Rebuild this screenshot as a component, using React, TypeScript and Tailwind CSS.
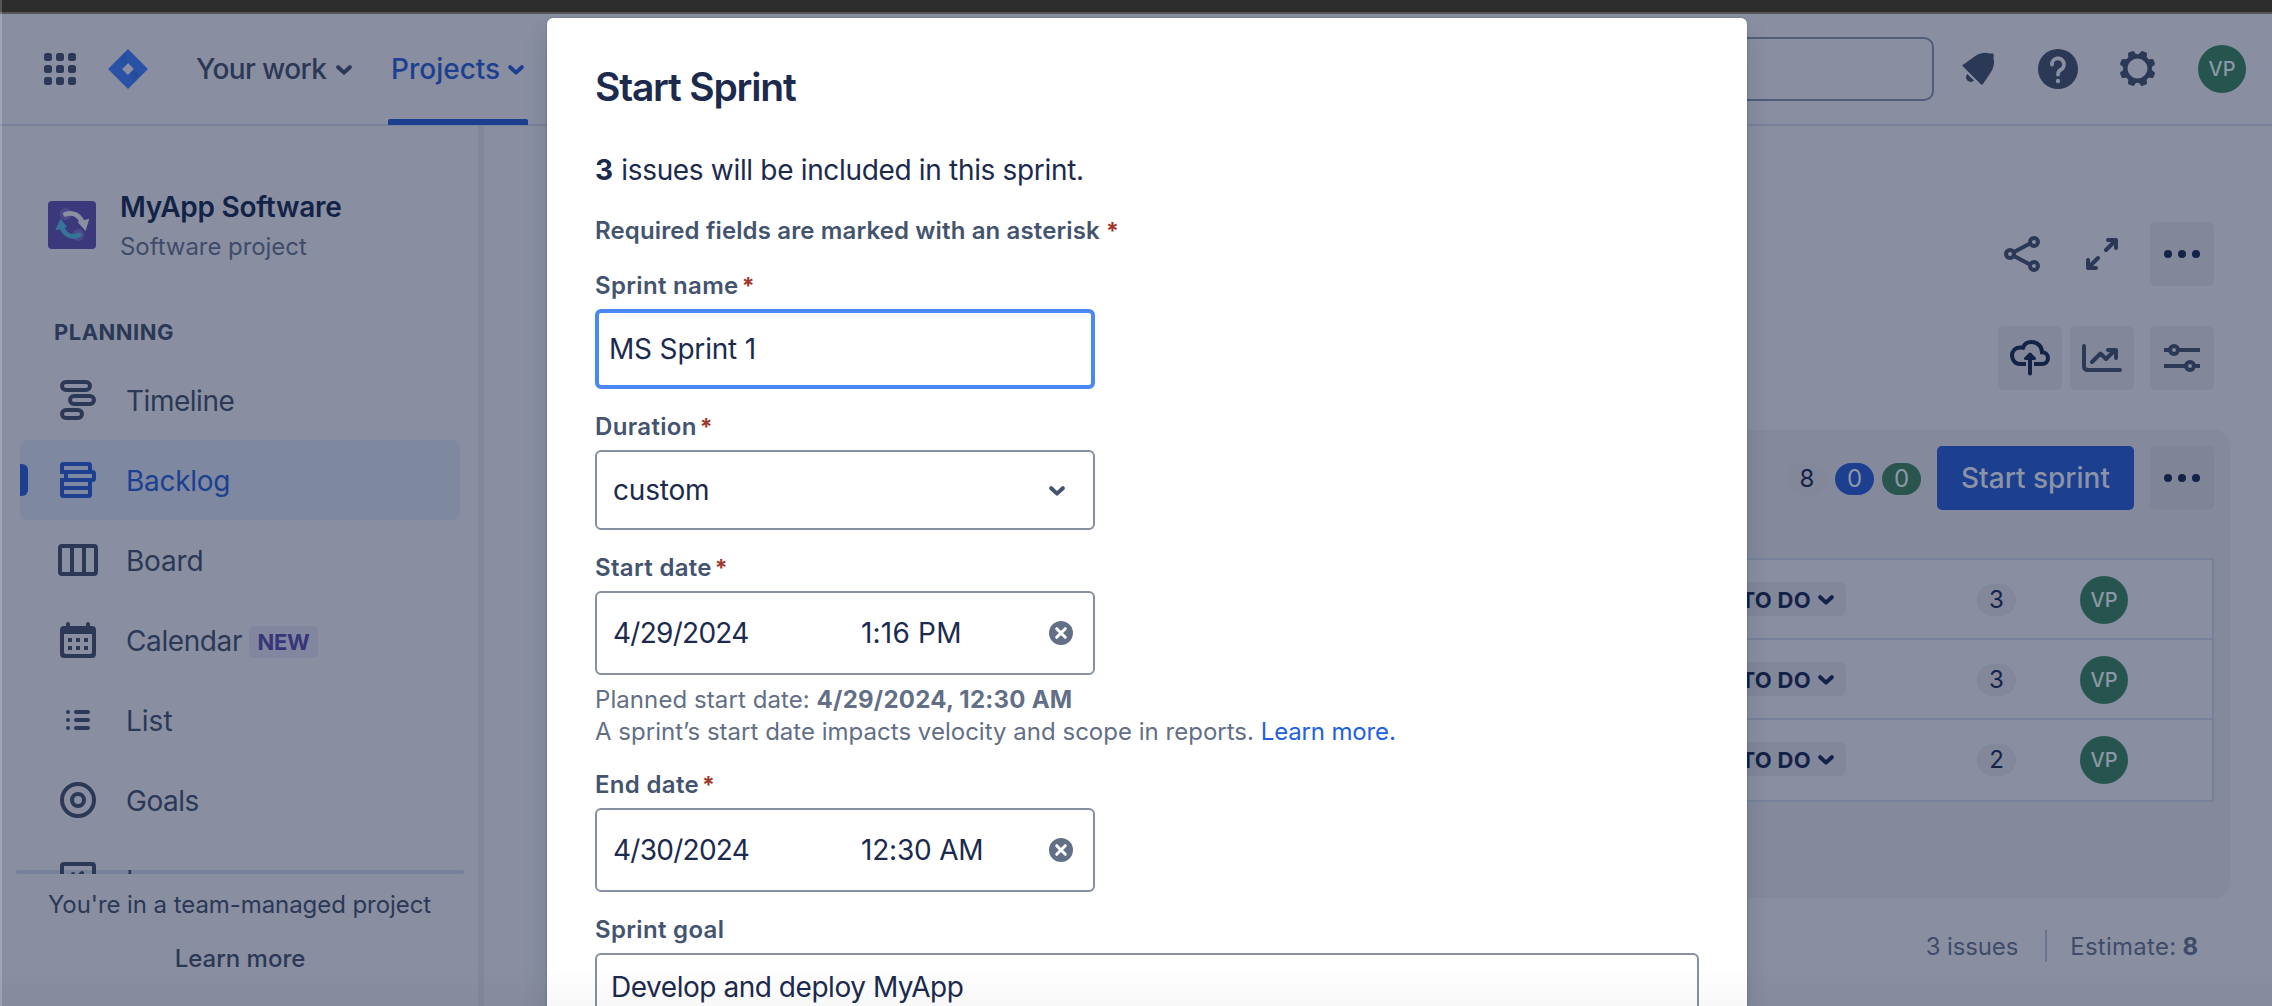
import type { ReactNode } from "react";

const NAVY = "#2b3856";
const INK = "#132347";
const PAGE = "#898fa1";

function Chevron({ color, className = "" }: { color: string; className?: string }) {
  return (
    <svg width="16" height="10" viewBox="0 0 16 10" className={"shrink-0 " + className}>
      <path d="M2.2 2.2 8 7.6l5.800-5.400" fill="none" stroke={color} strokeWidth="4" strokeLinecap="round" strokeLinejoin="round" />
    </svg>
  );
}

function GridIcon() {
  return (
    <div className="grid size-8 grid-cols-3 gap-1">
      {Array.from({ length: 9 }, (_, i) => (
        <span key={i} className="rounded-[2.500px] bg-[#2b3856]" />
      ))}
    </div>
  );
}

function Logo() {
  return (
    <svg width="40" height="40" viewBox="0 0 40 40">
      <defs>
        <linearGradient id="lg1" x1="0.9" y1="0.2" x2="0.3" y2="0.7">
          <stop offset="0" stopColor="#21438c" />
          <stop offset="1" stopColor="#2952a8" />
        </linearGradient>
      </defs>
      <path d="M20 0 40 20 20 40 0 20ZM20 14l-6 6 6 6 6-6Z" fill="#2952a6" fillRule="evenodd" />
      <path d="M20 0.500C16.500 4.500 16.500 9.500 20 14l-5.500 5.500L9 14Z" fill="url(#lg1)" opacity="0.8" />
      <path d="M20 39.500C23.500 35.500 23.500 30.500 20 26l5.500-5.500L31 26Z" fill="url(#lg1)" opacity="0.8" />
    </svg>
  );
}

function BellIcon() {
  return (
    <svg width="48" height="48" viewBox="0 0 48 48" fill={NAVY}>
      <path d="M8 20.500 22 10.500C27 7.200 32.500 7.300 36.500 8.800Q38.500 7.600 39.500 9.200 40.200 10.800 39.300 12.500C41 18 39.500 23 37 27L29 39Q28 40.500 26.600 39Z" />
      <path d="M13.300 29 20 35.500A4.600 4.600 0 1 1 13.300 29Z" />
    </svg>
  );
}

function HelpIcon() {
  return (
    <svg width="48" height="48" viewBox="0 0 48 48">
      <circle cx="24" cy="24" r="20" fill={NAVY} />
      <path d="M18 19.500a6 6 0 1 1 8.800 5.200C25 25.800 24 26.800 24 29.500" fill="none" stroke={PAGE} strokeWidth="3.800" strokeLinecap="round" />
      <circle cx="24" cy="36" r="2.200" fill={PAGE} />
    </svg>
  );
}

function GearIcon() {
  return (
    <svg width="48" height="48" viewBox="0 0 48 48">
      <circle cx="23.500" cy="23.500" r="12.200" fill="none" stroke={NAVY} strokeWidth="4.400" />
      {[22.5, 67.5, 112.5, 157.5, 202.5, 247.5, 292.5, 337.5].map((a) => (
        <path key={a} d="M18.800 12 20.200 6.600Q20.500 5.500 21.600 5.500h3.800q1.100 0 1.400 1.100L28.200 12Z" fill={NAVY} transform={`rotate(${a} 23.500 23.500)`} />
      ))}
    </svg>
  );
}

function Avatar() {
  return (
    <div className="flex size-12 shrink-0 items-center justify-center rounded-full bg-[#265550] text-[20px] font-medium leading-none text-[#8c98a6]">
      VP
    </div>
  );
}

function ProjectAvatar() {
  return (
    <svg width="48" height="48" viewBox="0 0 48 48" className="shrink-0">
      <rect width="48" height="48" rx="4" fill="#3b387c" />
      <circle cx="17.700" cy="13" r="6" fill="#4b4988" />
      <circle cx="30.300" cy="34" r="6" fill="#4b4988" />
      <path d="M17.500 13.200C25 10.500 31.500 14.500 34.500 21.500" fill="none" stroke="#8b8f9f" strokeWidth="4.800" strokeLinecap="round" />
      <path d="M29.500 21 41.300 17.700 37.600 30Z" fill="#8b8f9f" />
      <path d="M31 34C23.500 37.500 16 33.500 13.500 25.500" fill="none" stroke="#37749a" strokeWidth="4.800" strokeLinecap="round" />
      <path d="M12.500 17.600 7.200 29.400 19.200 26Z" fill="#37749a" />
    </svg>
  );
}

function TimelineIcon() {
  return (
    <svg width="40" height="48" viewBox="0 0 40 48" fill="none" stroke={NAVY} strokeWidth="4">
      <rect x="4" y="6" width="28" height="8" rx="4" />
      <rect x="12" y="20" width="24" height="8" rx="4" />
      <rect x="4" y="34" width="20" height="8" rx="4" />
    </svg>
  );
}

function BacklogIcon() {
  return (
    <svg width="40" height="48" viewBox="0 0 40 48" fill="none" stroke="#1d3f8f" strokeWidth="4">
      <path d="M8 16H4V9.500Q4 8 5.500 8h25Q32 8 32 9.500V16" />
      <rect x="8" y="16" width="28" height="8" rx="1.500" />
      <path d="M8 24H4v14.500Q4 40 5.500 40h25q1.500 0 1.500-1.500V24M4 32h28" />
    </svg>
  );
}

function BoardIcon() {
  return (
    <svg width="40" height="48" viewBox="0 0 40 48" fill="none" stroke={NAVY} strokeWidth="4">
      <rect x="2" y="10" width="36" height="28" rx="2" />
      <path d="M14 10v28M26 10v28" />
    </svg>
  );
}

function CalendarIcon() {
  return (
    <svg width="40" height="48" viewBox="0 0 40 48" fill={NAVY}>
      <rect x="8" y="6" width="4" height="8" rx="2" />
      <rect x="28" y="6" width="4" height="8" rx="2" />
      <path fillRule="evenodd" d="M6 10h28q4 0 4 4v24q0 4-4 4H6q-4 0-4-4V14q0-4 4-4ZM6 18v18q0 2 2 2h24q2 0 2-2V18Z" />
      {[10, 18, 26].map((x) => (
        <g key={x}>
          <rect x={x} y="22" width="4" height="4" />
          <rect x={x} y="30" width="4" height="4" />
        </g>
      ))}
    </svg>
  );
}

function ListIcon() {
  return (
    <svg width="40" height="48" viewBox="0 0 40 48" fill={NAVY}>
      {[14, 22, 30].map((y) => (
        <g key={y}>
          <rect x="8" y={y} width="4" height="4" rx="2" />
          <rect x="16" y={y} width="16" height="4" rx="2" />
        </g>
      ))}
    </svg>
  );
}

function GoalsIcon() {
  return (
    <svg width="40" height="48" viewBox="0 0 40 48" fill="none" stroke={NAVY} strokeWidth="4">
      <circle cx="20" cy="24" r="16" />
      <circle cx="20" cy="24" r="6" />
    </svg>
  );
}

function IssuesIcon() {
  return (
    <svg width="40" height="48" viewBox="0 0 40 48" fill="none" stroke={NAVY} strokeWidth="4">
      <rect x="4" y="8" width="32" height="32" rx="2" />
      <path d="m24 17-7 7M15 18v6" strokeLinecap="round" />
    </svg>
  );
}

function ShareIcon() {
  return (
    <svg width="64" height="64" viewBox="0 0 64 64" fill="none" stroke={NAVY} strokeWidth="4">
      <circle cx="20" cy="32" r="4" />
      <circle cx="44" cy="20" r="4" />
      <circle cx="44" cy="44" r="4" />
      <path d="m24 30 16-8.500M24 34l16 8.500" />
    </svg>
  );
}

function ExpandIcon() {
  return (
    <svg width="64" height="64" viewBox="0 0 64 64" fill="none" stroke={NAVY} strokeWidth="4" strokeLinecap="round" strokeLinejoin="round">
      <path d="m36 28 9-9M38 18h8v8M28 36l-9 9M18 38v8h8" />
      <path d="M41 18h5v5ZM18 41v5h5Z" fill={NAVY} strokeWidth="2" />
    </svg>
  );
}

function DotsIcon() {
  return (
    <svg width="64" height="64" viewBox="0 0 64 64" fill={INK}>
      <circle cx="18" cy="32" r="4" />
      <circle cx="32" cy="32" r="4" />
      <circle cx="46" cy="32" r="4" />
    </svg>
  );
}

function CloudIcon() {
  return (
    <svg width="64" height="64" viewBox="0 0 64 64" fill="none" stroke={INK} strokeWidth="4">
      <path d="M28 38h-6C17 38 14 34 14 29.500 14 25 17.500 21 22.500 21.500L25 21.800C26.200 18 29.500 16 33.500 16 39.500 16 44 20.500 44 26.200 47.500 26.200 50 28.800 50 32 50 35.500 47.500 38 44 38h-8" />
      <path d="M32 29v18.500" strokeLinecap="round" />
      <path d="M32 28l-4.500 4.500h9Z" fill={INK} strokeWidth="3" strokeLinejoin="round" />
    </svg>
  );
}

function ChartIcon() {
  return (
    <svg width="64" height="64" viewBox="0 0 64 64" fill="none" stroke={NAVY} strokeWidth="4" strokeLinecap="round" strokeLinejoin="round">
      <path d="M14 20v20q0 4 4 4h32" />
      <path d="m22 36 8.500-8.500L36 33l9-9M38 24h8v8" />
      <path d="M41.500 24h4.500v4.500Z" fill={NAVY} strokeWidth="2" />
    </svg>
  );
}

function SlidersIcon() {
  return (
    <svg width="64" height="64" viewBox="0 0 64 64" fill="none" stroke={NAVY} strokeWidth="4">
      <path d="M14 24h6M28 24h22M14 40h22M44 40h6" />
      <circle cx="24" cy="24" r="4" />
      <circle cx="40" cy="40" r="4" />
    </svg>
  );
}

function ClearIcon() {
  return (
    <svg width="24" height="24" viewBox="0 0 24 24" className="shrink-0">
      <circle cx="12" cy="12" r="12" fill="#626f86" />
      <path d="m7.700 7.700 8.600 8.600m0-8.600-8.600 8.600" stroke="#fff" strokeWidth="3" strokeLinecap="round" />
    </svg>
  );
}

function IconButton({ children, plain = false }: { children: ReactNode; plain?: boolean }) {
  return <button className={plain ? "block size-16" : "block size-16 rounded-md bg-[#82879a]"}>{children}</button>;
}

function NavItem({ icon, label, active = false, badge, tracking = "" }: { icon: ReactNode; label: string; active?: boolean; badge?: string; tracking?: string }) {
  return (
    <div className={"relative ml-5 flex h-20 w-[440px] shrink-0 items-center overflow-hidden rounded-md pl-[38px] text-[28px] leading-10 " + (active ? "bg-[#7e89a1] text-[#1d3f8f]" : "text-[#2b3856]")}>
      {active && <span className="absolute left-0 top-6 h-8 w-2 rounded-r-md bg-[#1d3f8f]" />}
      <span className="mr-7 block w-10">{icon}</span>
      <span className={"pt-px " + tracking}>{label}</span>
      {badge && (
        <span className="ml-[7px] mt-1 flex h-8 w-[69px] items-center justify-center rounded-[5px] bg-[#83869f] text-[22px] font-bold tracking-[-0.300px] text-[#37357a]">{badge}</span>
      )}
    </div>
  );
}

function Sidebar() {
  return (
    <aside className="flex w-[484px] shrink-0 flex-col border-r-[6px] border-[#82879a]">
      <div className="flex items-center gap-6 pl-12 pt-[61px]">
        <ProjectAvatar />
        <div className="w-[240px] whitespace-nowrap">
          <div className="h-10 text-[28px] font-semibold leading-[41px] tracking-[-0.250px] text-[#132347]">MyApp Software</div>
          <div className="h-9 text-[24px] leading-10 tracking-[-0.060px] text-[#3f4c69]">Software project</div>
        </div>
      </div>
      <div className="mt-[53px] pl-[54px] text-[22px] font-bold leading-8 tracking-[0.480px] text-[#2b3856]">PLANNING</div>
      <div className="relative z-10 mt-3 flex h-[514px] shrink-0 flex-col overflow-hidden">
        <NavItem icon={<TimelineIcon />} label="Timeline" tracking="tracking-[-0.480px]" />
        <NavItem icon={<BacklogIcon />} label="Backlog" active tracking="tracking-[-0.280px]" />
        <NavItem icon={<BoardIcon />} label="Board" tracking="tracking-[-0.200px]" />
        <NavItem icon={<CalendarIcon />} label="Calendar" badge="NEW" tracking="tracking-[-0.400px]" />
        <NavItem icon={<ListIcon />} label="List" />
        <NavItem icon={<GoalsIcon />} label="Goals" tracking="tracking-[-0.500px]" />
        <NavItem icon={<IssuesIcon />} label="Issues" />
      </div>
      <div className="-mt-1 ml-4 h-1 w-[448px] shrink-0 rounded-full bg-[#77819a]" />
      <div className="mt-[15px] pl-px text-center text-[24px] leading-8 tracking-[-0.070px] text-[#2b3856]">You're in a team-managed project</div>
      <div className="mt-[22px] pl-0.5 text-center text-[24px] font-medium leading-8 text-[#2b3856]">Learn more</div>
    </aside>
  );
}

function TopNav() {
  return (
    <header className="flex h-28 shrink-0 items-center border-b-2 border-[#77819a] pl-11 pr-[26px] text-[28px] font-medium text-[#2b3856]">
      <GridIcon />
      <div className="ml-8"><Logo /></div>
      <div className="ml-12 flex w-[156px] items-center justify-between whitespace-nowrap">
        <span className="tracking-[-0.600px]">Your work</span>
        <Chevron color={NAVY} className="mt-0.5" />
      </div>
      <div className="relative ml-9 flex h-full w-[140px] items-center justify-between pl-[3px] pr-1 text-[#1d3f8f]">
        <span>Projects</span>
        <Chevron color="#1d3f8f" className="mt-0.5" />
        <span className="absolute -bottom-px left-0 h-1.5 w-full rounded-t-[2px] bg-[#1d3f8f]" />
      </div>
      <div className="ml-auto h-16 w-[400px] rounded-[10px] border-2 border-[#505c7a]" />
      <div className="ml-5"><BellIcon /></div>
      <div className="ml-8"><HelpIcon /></div>
      <div className="ml-8"><GearIcon /></div>
      <div className="ml-9"><Avatar /></div>
    </header>
  );
}

function IssueRow({ points, last = false }: { points: number; last?: boolean }) {
  return (
    <div className={"flex items-center justify-end pr-[84px] " + (last ? "h-20" : "h-20 border-b-2 border-[#77819a] pt-0.5")}>
      <div className="mb-0.5 flex h-[34px] items-center rounded-md bg-[#82879a] px-3 pt-0.5 text-[22px] font-bold tracking-[0.300px] text-[#132347]">
        TO DO
        <Chevron color={INK} className="ml-[7px]" />
      </div>
      <div className="ml-[131px] flex h-8 w-[39px] items-center justify-center rounded-full bg-[#82879a] text-[24px] text-[#132347]">{points}</div>
      <div className="ml-16"><Avatar /></div>
    </div>
  );
}

function Board() {
  return (
    <main className="flex min-w-0 flex-1 flex-col">
      <div className="mt-24 flex justify-end gap-4 pr-[58px]">
        <IconButton plain><ShareIcon /></IconButton>
        <IconButton plain><ExpandIcon /></IconButton>
        <IconButton><DotsIcon /></IconButton>
      </div>
      <div className="mt-10 flex justify-end pr-[58px]">
        <IconButton><CloudIcon /></IconButton>
        <div className="ml-2 mr-4"><IconButton><ChartIcon /></IconButton></div>
        <IconButton><SlidersIcon /></IconButton>
      </div>
      <section className="ml-[72px] mr-[42px] mt-10 h-[468px] rounded-2xl bg-[#848a9b] p-4">
        <div className="flex h-16 items-center justify-end text-[24px]">
          <span className="mr-2 mt-0.5 flex h-8 w-10 items-center justify-center rounded-full bg-[#82879a] text-[#132347]">8</span>
          <span className="mr-2 mt-0.5 flex h-8 w-[39px] items-center justify-center rounded-full bg-[#1d3f8f] text-[#8c98a6]">0</span>
          <span className="mr-4 mt-0.5 flex h-8 w-[39px] items-center justify-center rounded-full bg-[#2a554f] text-[#8c98a6]">0</span>
          <button className="mr-4 h-16 w-[197px] rounded-[5px] bg-[#1d3f8f] text-[28px] font-medium text-[#8c93a6]">Start sprint</button>
          <button className="size-16 rounded-md bg-[#7f8597]"><DotsIcon /></button>
        </div>
        <div className="mt-12 border-2 border-[#77819a] bg-[#898fa1]">
          <IssueRow points={3} />
          <IssueRow points={3} />
          <IssueRow points={2} last />
        </div>
      </section>
      <div className="mt-8 flex h-8 items-center justify-end pr-[74px] text-[24px] text-[#3f4c69]">
        <span className="pt-0.5 leading-8 tracking-[-0.130px]">3 issues</span>
        <span className="ml-[27px] mr-[23px] h-8 w-0.5 bg-[#6a748f]" />
        <span className="pt-0.5 leading-8 tracking-[0.260px]">Estimate:</span>
        <span className="ml-[6px] pt-0.5 font-bold leading-8">8</span>
      </div>
    </main>
  );
}

function Label({ children, required = false }: { children: ReactNode; required?: boolean }) {
  return (
    <div className="mt-[21px] h-8 whitespace-nowrap text-[24px] font-semibold leading-[34px] tracking-[0.320px] text-[#44546f]">
      {children}
      {required && <span className="ml-[3px] text-[23px] font-bold text-[#a03529]">*</span>}
    </div>
  );
}

function DateTimeField({ date, time, timeTracking }: { date: string; time: string; timeTracking: string }) {
  return (
    <div className="mt-2 flex h-[84px] w-[500px] items-center rounded-md border-2 border-[#8590a2] pl-4 pr-5 text-[28px] text-[#1b2a4d]">
      <span className="w-[248px] tracking-[-0.730px]">{date}</span>
      <span className={"flex-1 " + timeTracking}>{time}</span>
      <ClearIcon />
    </div>
  );
}

function StartSprintDialog() {
  return (
    <div className="absolute inset-0 z-20 overflow-hidden pl-[547px] pt-[18px]">
      <div className="h-[1100px] w-[1200px] rounded-t-md bg-white px-12 pt-[45px] text-[#1b2a4d] shadow-[0_0_2px_rgba(9,30,66,0.31),0_16px_24px_rgba(9,30,66,0.15)]">
        <h1 className="h-12 text-[39px] font-semibold leading-[48px] tracking-[-1.200px]">Start Sprint</h1>
        <p className="mt-[39px] text-[28px] leading-10 tracking-[-0.330px]">
          <b className="mr-px">3</b> issues will be included in this sprint.
        </p>
        <p className="mt-6 h-8 text-[24px] font-semibold leading-[34px] tracking-[0.130px] text-[#44546f]">
          Required fields are marked with an asterisk<span className="ml-1.5 text-[23px] font-bold text-[#a03529]">*</span>
        </p>
        <div className="pt-0.5">
          <Label required>Sprint name</Label>
        </div>
        <div className="mt-2 flex h-20 w-[500px] items-center rounded-md border-4 border-[#4c88f5] pl-[10px] text-[28px] tracking-[-0.180px]">MS Sprint 1</div>
        <Label required>Duration</Label>
        <div className="mt-2 flex h-20 w-[500px] items-center justify-between rounded-md border-2 border-[#8590a2] pl-4 pr-7 text-[28px] tracking-[-0.200px]">
          custom
          <Chevron color="#44546f" className="mt-0.5" />
        </div>
        <Label required>Start date</Label>
        <DateTimeField date="4/29/2024" time="1:16 PM" timeTracking="tracking-[0.200px]" />
        <div className="-mb-px mt-[9px] whitespace-nowrap text-[24px] leading-8 text-[#626f86]">
          <p className="tracking-[0.080px]">
            Planned start date: <b className="tracking-[0.250px]">4/29/2024, 12:30 AM</b>
          </p>
          <p className="tracking-[0.015px]">
            A sprint’s start date impacts velocity and scope in reports. <span className="tracking-[-0.150px] text-[#2160e3]">Learn more.</span>
          </p>
        </div>
        <Label required>End date</Label>
        <DateTimeField date="4/30/2024" time="12:30 AM" timeTracking="tracking-[-0.200px]" />
        <Label>Sprint goal</Label>
        <div className="mt-2 h-[200px] rounded-md border-2 border-[#8590a2] px-[14px] pt-3 text-[28px] leading-10 tracking-[-0.460px]">Develop and deploy MyApp</div>
      </div>
      <div className="absolute bottom-0 left-0 h-10 w-full bg-gradient-to-b from-transparent to-black/[0.03]" />
    </div>
  );
}

export default function App() {
  return (
    <div className="relative flex h-[1006px] w-[2272px] flex-col overflow-hidden bg-[#898fa1] font-['Inter',sans-serif]">
      <div className="h-3.5 shrink-0 border-b-2 border-[#575757] bg-[#2d2d2d]" />
      <TopNav />
      <div className="flex min-h-0 flex-1">
        <Sidebar />
        <Board />
      </div>
      <span className="absolute bottom-0 left-0 top-0 w-0.5 bg-white/20" />
      <StartSprintDialog />
    </div>
  );
}
